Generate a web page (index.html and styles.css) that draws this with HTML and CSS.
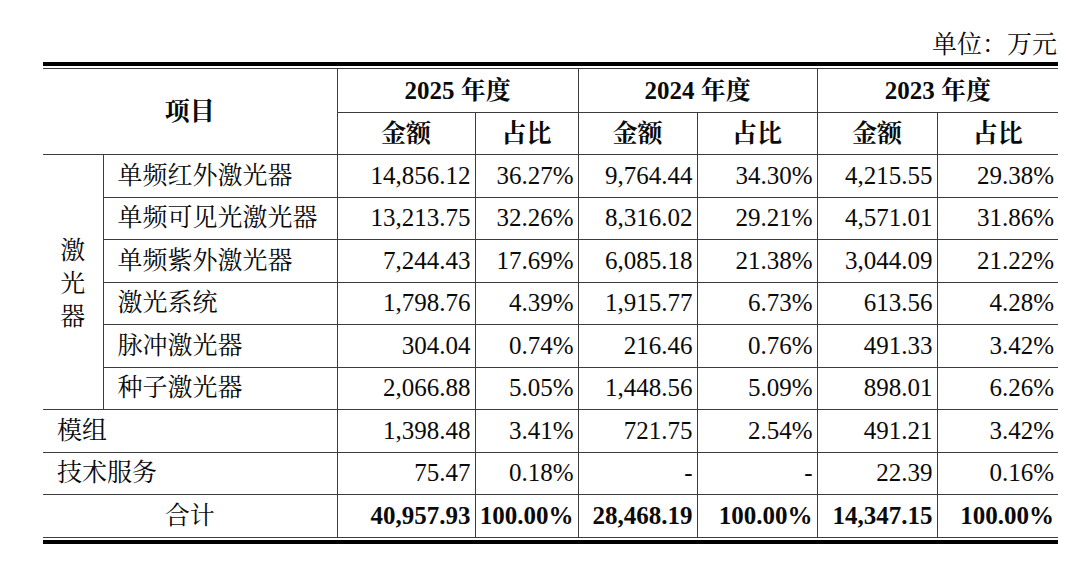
FILE: index.html
```html
<!DOCTYPE html>
<html lang="zh-CN">
<head>
<meta charset="utf-8">
<title>收入构成</title>
<link rel="stylesheet" href="styles.css">
</head>
<body>
<div class="page">
  <div class="unit">单位：万元</div>
  <div class="frame">
    <table class="data">
      <colgroup>
        <col class="c-group">
        <col class="c-item">
        <col class="c-a25">
        <col class="c-p25">
        <col class="c-a24">
        <col class="c-p24">
        <col class="c-a23">
        <col class="c-p23">
      </colgroup>
      <thead>
        <tr class="h1">
          <th class="edge-l" colspan="2" rowspan="2">项目</th>
          <th colspan="2">2025 年度</th>
          <th colspan="2">2024 年度</th>
          <th colspan="2">2023 年度</th>
        </tr>
        <tr class="h2">
          <th class="sub">金额</th><th class="sub">占比</th>
          <th class="sub">金额</th><th class="sub">占比</th>
          <th class="sub">金额</th><th class="sub">占比</th>
        </tr>
      </thead>
      <tbody>
        <tr>
          <td class="edge-l group" rowspan="6"><span class="vert">激光器</span></td>
          <td class="name">单频红外激光器</td>
          <td class="num">14,856.12</td><td class="num">36.27%</td>
          <td class="num">9,764.44</td><td class="num">34.30%</td>
          <td class="num">4,215.55</td><td class="num">29.38%</td>
        </tr>
        <tr>
          <td class="name">单频可见光激光器</td>
          <td class="num">13,213.75</td><td class="num">32.26%</td>
          <td class="num">8,316.02</td><td class="num">29.21%</td>
          <td class="num">4,571.01</td><td class="num">31.86%</td>
        </tr>
        <tr>
          <td class="name">单频紫外激光器</td>
          <td class="num">7,244.43</td><td class="num">17.69%</td>
          <td class="num">6,085.18</td><td class="num">21.38%</td>
          <td class="num">3,044.09</td><td class="num">21.22%</td>
        </tr>
        <tr>
          <td class="name">激光系统</td>
          <td class="num">1,798.76</td><td class="num">4.39%</td>
          <td class="num">1,915.77</td><td class="num">6.73%</td>
          <td class="num">613.56</td><td class="num">4.28%</td>
        </tr>
        <tr>
          <td class="name">脉冲激光器</td>
          <td class="num">304.04</td><td class="num">0.74%</td>
          <td class="num">216.46</td><td class="num">0.76%</td>
          <td class="num">491.33</td><td class="num">3.42%</td>
        </tr>
        <tr>
          <td class="name">种子激光器</td>
          <td class="num">2,066.88</td><td class="num">5.05%</td>
          <td class="num">1,448.56</td><td class="num">5.09%</td>
          <td class="num">898.01</td><td class="num">6.26%</td>
        </tr>
        <tr>
          <td class="edge-l name" colspan="2">模组</td>
          <td class="num">1,398.48</td><td class="num">3.41%</td>
          <td class="num">721.75</td><td class="num">2.54%</td>
          <td class="num">491.21</td><td class="num">3.42%</td>
        </tr>
        <tr>
          <td class="edge-l name" colspan="2">技术服务</td>
          <td class="num">75.47</td><td class="num">0.18%</td>
          <td class="num">-</td><td class="num">-</td>
          <td class="num">22.39</td><td class="num">0.16%</td>
        </tr>
        <tr class="total">
          <td class="edge-l center" colspan="2">合计</td>
          <td class="num">40,957.93</td><td class="num">100.00%</td>
          <td class="num">28,468.19</td><td class="num">100.00%</td>
          <td class="num">14,347.15</td><td class="num">100.00%</td>
        </tr>
      </tbody>
    </table>
  </div>
</div>
</body>
</html>
```
FILE: styles.css
```css
html, body {
  margin: 0;
  padding: 0;
  background: #ffffff;
}

body {
  font-family: "Liberation Serif", "Noto Serif CJK SC", "Noto Sans CJK SC", serif;
  font-size: 25px;
  color: #0a0a0a;
}

.page {
  width: 1015px;
  padding: 30px 0 0 43px;
}

.unit {
  height: 30px;
  line-height: 30px;
  text-align: right;
  margin-bottom: 2px;
  padding-right: 1px;
}

.frame {
  border-top: 4px solid #000;
  border-bottom: 4px solid #000;
  padding: 2px 0 2px;
}

.data {
  width: 1015px;
  table-layout: fixed;
  border-collapse: collapse;
  border-top: 1px solid #222;
  border-bottom: 1px solid #222;
}

.c-group { width: 60px; }
.c-item { width: 234px; }
.c-a25 { width: 138px; }
.c-p25 { width: 103px; }
.c-a24 { width: 119px; }
.c-p24 { width: 120px; }
.c-a23 { width: 120px; }
.c-p23 { width: 121px; }

.data th,
.data td {
  border: 1px solid #3c3c3c;
  padding: 0 4px;
  white-space: nowrap;
  line-height: 30px;
}

.data tr > :last-child {
  border-right: 0;
}

.data .edge-l {
  border-left: 0;
}

.data th {
  font-weight: bold;
  text-align: center;
}

.data .sub {
  font-weight: bold;
}

.h1 th {
  height: 42px;
  padding-top: 1px;
}

.h2 th {
  height: 41px;
}

.data tbody td {
  height: 41.5px;
}

.data .num {
  text-align: right;
}

.data .name {
  text-align: left;
  padding-left: 14px;
}

.data .center {
  text-align: center;
}

.data .group {
  text-align: center;
  vertical-align: middle;
}

.vert {
  display: inline-block;
  width: 1em;
  white-space: normal;
  line-height: 33px;
  padding-top: 2px;
}

.total .num {
  font-weight: bold;
}
```
